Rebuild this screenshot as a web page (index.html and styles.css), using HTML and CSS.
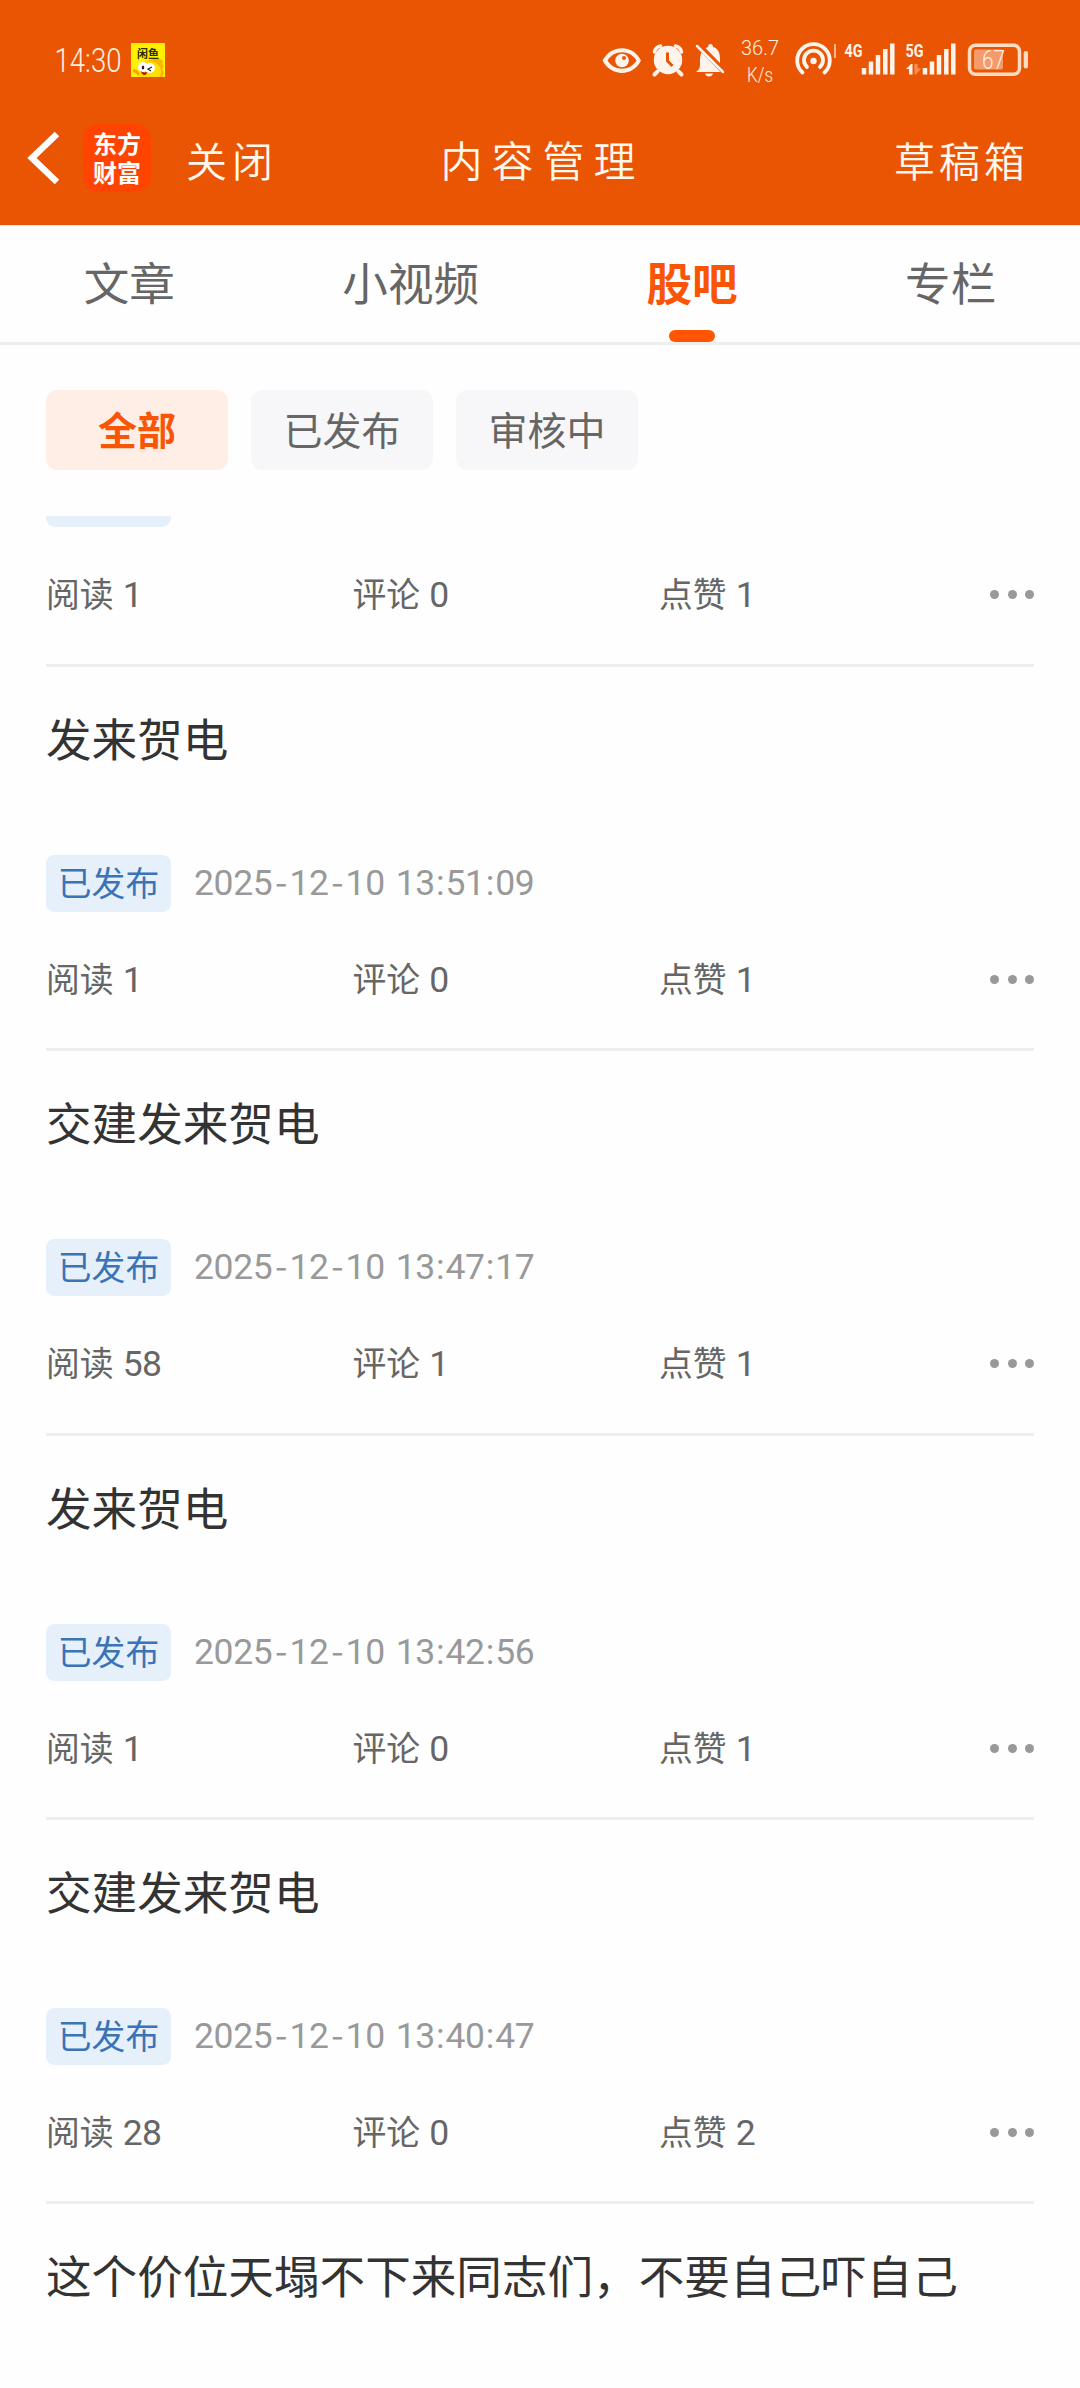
FILE: index.html
```html
<!DOCTYPE html>
<html lang="zh-CN">
<head>
<meta charset="utf-8">
<title>内容管理</title>
<link rel="stylesheet" href="styles.css">
</head>
<body>
<header class="header">
  <div class="status">
    <svg class="status-left" viewBox="50 36 120 54" width="120" height="54">
      <text class="hand" x="54.500" y="71.5" font-size="33" textLength="67" lengthAdjust="spacingAndGlyphs">14:30</text>
      <rect x="131" y="43" width="34" height="34" fill="#fff000"/>
      <path d="M143 77C138 66 143 60 151 60c4-2 9-2 12 1l-1 3 2 2-2 3 2 4-2 4z" fill="#ffb300"/>
      <path d="M133 69l4 1 3 4-2 2-2-3-3-1z" fill="#ff9c00"/>
      <path d="M140 77c-4-10 1-16 8-16s13 4 13 11l-1 5z" fill="#ffe000"/>
      <circle cx="143" cy="67" r="5" fill="#fff"/><circle cx="150" cy="68" r="5" fill="#fff"/>
      <ellipse cx="143" cy="67.500" rx="1.200" ry="2" fill="#222"/>
      <path d="M152 67l-4 2 3 2" fill="none" stroke="#222" stroke-width="1.200"/>
      <path d="M141 71c2 2 4 1.500 6 1-.5 4-5 4-6-1z" fill="#b30c00"/>
      <text class="mini" x="137" y="57.500" font-size="11" textLength="22">闲鱼</text>
    </svg>
    <svg class="status-right" viewBox="600 30 430 60" width="430" height="60">
      <path d="M602.500 60.500C611 44 633 44 641 60.500C633 77 611 77 602.500 60.500z" fill="#fff4ec"/>
      <path d="M607.500 60.500C614 49.500 630 49.500 636.500 60.500C630 71.500 614 71.500 607.500 60.500z" fill="#ea5504"/>
      <circle cx="622" cy="60.500" r="6.800" fill="#fff4ec"/><circle cx="624" cy="58" r="2" fill="#ea5504"/>
      <g fill="none" stroke="#fff4ec" stroke-linecap="round">
        <path d="M654.500 52q1-5 6-6M675.500 46q5 1 6 6" stroke-width="3.500"/>
        <path d="M657.500 71.500l-3 3M678.500 71.500l3 3" stroke-width="4"/>
      </g>
      <circle cx="668" cy="60" r="14.200" fill="#fff4ec"/>
      <path d="M667.500 52.500v8.500l5 5" fill="none" stroke="#ea5504" stroke-width="3"/>
      <path d="M696 72c3-2 4-4 4-8v-4c0-6 2-10 6-12l2-1c0-4 5-4 5 0 5 1 7 6 7 12v5c0 4 1 6 3 8zM705 73.500h8c-1 4-7 4-8 0z" fill="#fff4ec"/>
      <path d="M698 44.500l28 29" stroke="#ea5504" stroke-width="6"/>
      <path d="M697 46l26 26" stroke="#fff4ec" stroke-width="2.500" stroke-linecap="round"/>
      <text class="hand" x="741" y="54.500" font-size="21" textLength="38" lengthAdjust="spacingAndGlyphs">36.7</text>
      <text class="hand" x="747" y="82" font-size="21" textLength="26" lengthAdjust="spacingAndGlyphs">K/s</text>
      <g fill="none" stroke="#fff4ec" stroke-width="3.800" stroke-linecap="round">
        <path d="M802.500 72.500a16.300 16.300 0 1 1 22 0M807 67a9.500 9.500 0 1 1 13 0"/>
      </g>
      <circle cx="813.500" cy="61" r="3.200" fill="#fff4ec"/>
      <path d="M835 44v14" stroke="#ffd8bd" stroke-width="1.500"/>
      <text class="net" x="844.500" y="57.300" font-size="18" textLength="18" lengthAdjust="spacingAndGlyphs">4G</text>
      <text class="net" x="905.500" y="57.300" font-size="18" textLength="18" lengthAdjust="spacingAndGlyphs">5G</text>
      <g stroke="#fff4ec" stroke-width="4.500">
        <path d="M864 68v6.500M871 61.500v13M878 55v19.500M885.300 49v25.500M892.300 43.500v31"/>
        <path d="M925 68v6.500M932 61.500v13M939 55v19.500M946.300 49v25.500M953.300 43.500v31"/>
      </g>
      <path d="M906 69l5-5h1.500v10.500h-3.500v-5.500z" fill="#fff4ec"/>
      <path d="M914.500 64h3v4.500h3.500l-5 6h-1.500z" fill="#ff8f55"/>
      <rect x="969.500" y="45.200" width="50" height="29" rx="6" fill="none" stroke="#ffdcc4" stroke-width="3.500"/>
      <rect x="974" y="49.500" width="29" height="20" rx="2" fill="#f59a6b"/>
      <rect x="1023.700" y="51" width="4.300" height="17.500" rx="2" fill="#ffdcc4"/>
      <text class="hand" x="982" y="68.500" font-size="25" textLength="23" lengthAdjust="spacingAndGlyphs">67</text>
    </svg>
  </div>
  <nav class="navbar">
    <div class="nav-left">
      <svg class="back" viewBox="0 0 34 56" width="34" height="56"><path d="M31 4L6 28l25 24" fill="none" stroke="#fff" stroke-width="6.500"/></svg>
      <div class="logo"><span>东方</span><span>财富</span></div>
      <span class="nav-text">关闭</span>
    </div>
    <h1 class="nav-title">内容管理</h1>
    <span class="nav-text nav-drafts">草稿箱</span>
  </nav>
</header>

<div class="tabs">
  <span class="tab">文章</span>
  <span class="tab">小视频</span>
  <span class="tab active">股吧</span>
  <span class="tab">专栏</span>
</div>

<div class="filters">
  <span class="chip selected">全部</span>
  <span class="chip">已发布</span>
  <span class="chip">审核中</span>
</div>

<main class="list">
  <article class="post first">
    <div class="tag-edge"></div>
    <div class="stats"><span>阅读 <b>1</b></span><span>评论 <b>0</b></span><span>点赞 <b>1</b></span><div class="more"><i></i><i></i><i></i></div></div>
  </article>
  <article class="post">
    <h2>发来贺电</h2>
    <div class="meta"><span class="tag">已发布</span><time>2025<i>-</i>12<i>-</i>10 13<u>:</u>51<u>:</u>09</time></div>
    <div class="stats"><span>阅读 <b>1</b></span><span>评论 <b>0</b></span><span>点赞 <b>1</b></span><div class="more"><i></i><i></i><i></i></div></div>
  </article>
  <article class="post">
    <h2>交建发来贺电</h2>
    <div class="meta"><span class="tag">已发布</span><time>2025<i>-</i>12<i>-</i>10 13<u>:</u>47<u>:</u>17</time></div>
    <div class="stats"><span>阅读 <b>58</b></span><span>评论 <b>1</b></span><span>点赞 <b>1</b></span><div class="more"><i></i><i></i><i></i></div></div>
  </article>
  <article class="post">
    <h2>发来贺电</h2>
    <div class="meta"><span class="tag">已发布</span><time>2025<i>-</i>12<i>-</i>10 13<u>:</u>42<u>:</u>56</time></div>
    <div class="stats"><span>阅读 <b>1</b></span><span>评论 <b>0</b></span><span>点赞 <b>1</b></span><div class="more"><i></i><i></i><i></i></div></div>
  </article>
  <article class="post">
    <h2>交建发来贺电</h2>
    <div class="meta"><span class="tag">已发布</span><time>2025<i>-</i>12<i>-</i>10 13<u>:</u>40<u>:</u>47</time></div>
    <div class="stats"><span>阅读 <b>28</b></span><span>评论 <b>0</b></span><span>点赞 <b>2</b></span><div class="more"><i></i><i></i><i></i></div></div>
  </article>
  <article class="post last">
    <h2>这个价位天塌不下来同志们，不要自己吓自己</h2>
  </article>
</main>
</body>
</html>
```
FILE: styles.css
```css
* { box-sizing: border-box; }

body {
  margin: 0;
  width: 1080px;
  height: 2388px;
  overflow: hidden;
  background: #fefefe;
  color: #666;
  font-family: "Noto Sans CJK SC", sans-serif;
}

/* header */
.header {
  height: 225px;
  padding-top: 30px;
  background: #ea5504;
  color: #fff8ee;
}
.status {
  display: flex;
  justify-content: space-between;
  height: 60px;
  padding: 0 50px;
}
.status-left { margin-top: 6px; }
.hand {
  font-family: Roboto, sans-serif;
  font-weight: 300;
  fill: #fff0e0;
}
.net {
  font-family: Roboto, sans-serif;
  font-weight: 700;
  fill: #fff4ec;
}
.mini {
  font-family: "Noto Sans CJK SC", sans-serif;
  font-weight: 700;
  fill: #2a2a00;
}
.navbar {
  display: grid;
  grid-template-columns: 1fr auto 1fr;
  align-items: center;
  height: 135px;
  padding: 0 51px 0 26px;
}
.nav-left {
  display: flex;
  align-items: center;
}
.back { display: block; }
.logo {
  display: flex;
  flex-direction: column;
  justify-content: center;
  align-items: center;
  width: 68px;
  height: 68px;
  margin-left: 23px;
  padding-bottom: 2px;
  border-radius: 15px;
  background: #ff4400;
  color: #fff;
  font-size: 24px;
  font-weight: 700;
  line-height: 29px;
}
.nav-text, .nav-title {
  margin: 2px 0 0;
  font-size: 41px;
  font-weight: 350;
  line-height: 60px;
}
.nav-left .nav-text {
  margin-left: 35px;
  letter-spacing: 5px;
}
.nav-title {
  font-size: 42px;
  letter-spacing: 9px;
  margin-left: 30px;
}
.nav-drafts {
  justify-self: end;
  letter-spacing: 4px;
}

/* tabs */
.tabs {
  display: flex;
  justify-content: space-around;
  height: 120px;
  border-top: 1px solid #ffe8cf;
  border-bottom: 3px solid #eee;
}
.tab {
  position: relative;
  font-size: 45.6px;
  line-height: 110px;
}
.tab.active {
  color: #f95505;
  font-weight: 700;
}
.tab.active::after {
  content: "";
  position: absolute;
  left: 50%;
  bottom: 0;
  width: 46px;
  height: 12px;
  margin-left: -23px;
  border-radius: 6px;
  background: #ff5500;
}

/* filters */
.filters {
  display: flex;
  gap: 22.8px;
  padding: 45px 46px 46px;
}
.chip {
  width: 182.2px;
  height: 80px;
  border-radius: 11.4px;
  background: #f7f7fa;
  font-size: 39px;
  line-height: 77px;
  text-align: center;
}
.chip.selected {
  background: #ffeee6;
  color: #f95505;
  font-weight: 700;
}

/* posts */
.list { padding: 0 46px; }
.post {
  height: 384.25px;
  padding-top: 40px;
  border-bottom: 3px solid #eee;
}
.post.first {
  height: 151px;
  padding-top: 0;
}
.post.last { height: auto; border-bottom: 0; }
.tag-edge {
  width: 125px;
  height: 11px;
  border-radius: 0 0 9px 9px;
  background: #e5f0fa;
}
.post h2 {
  margin: 0;
  color: #333;
  font-size: 45.6px;
  font-weight: 400;
  line-height: 60px;
  white-space: nowrap;
}
.meta {
  display: flex;
  align-items: center;
  height: 57px;
  margin-top: 88px;
}
.tag {
  width: 125px;
  height: 57px;
  border-radius: 8.5px;
  background: #e5f0fa;
  color: #3a73b6;
  font-size: 33.8px;
  line-height: 54px;
  text-align: center;
}
.meta time {
  margin-left: 23px;
  color: #999;
  font-family: Roboto, sans-serif;
  font-size: 35.5px;
  letter-spacing: -0.35px;
  line-height: 57px;
  word-spacing: 2.5px;
  white-space: nowrap;
}
.meta i, .meta u {
  display: inline-block;
  font-style: normal;
  text-align: center;
  text-decoration: none;
}
.meta i {
  width: 17px;
  font-family: "Noto Sans CJK SC", sans-serif;
  line-height: 1;
}
.meta u { width: 10.5px; }
.stats {
  display: grid;
  grid-template-columns: 306.5px 306.5px 1fr auto;
  align-items: center;
  height: 44px;
  margin-top: 45px;
  font-size: 33.8px;
  line-height: 44px;
}
.stats span {
  margin-top: -1px;
  word-spacing: 1.5px;
}
.stats b {
  font-family: Roboto, sans-serif;
  font-size: 35.5px;
  font-weight: 400;
  letter-spacing: -0.5px;
}
.more {
  display: flex;
  gap: 8.3px;
}
.more i {
  width: 9px;
  height: 9px;
  border-radius: 50%;
  background: #999;
}
```
